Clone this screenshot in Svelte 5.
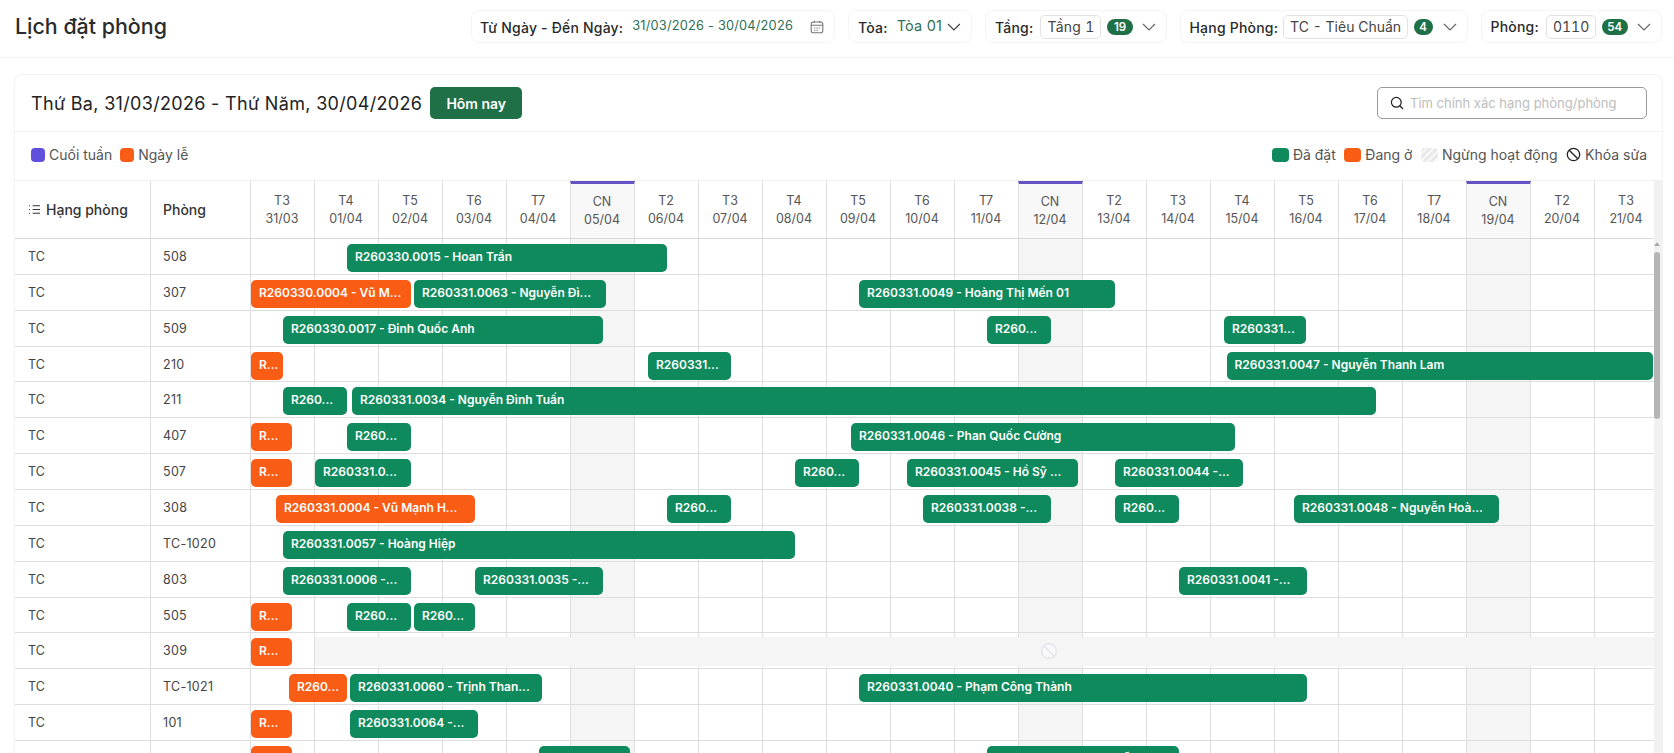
<script>
  const DAY = 64;
  const BASE = 250.5;
  const names = ['T3','T4','T5','T6','T7','CN','T2'];
  const days = Array.from({ length: 22 }, (_, i) => {
    const d = new Date(2026, 2, 31 + i);
    const dd = String(d.getDate()).padStart(2, '0');
    const mm = String(d.getMonth() + 1).padStart(2, '0');
    return { label: names[i % 7], date: `${dd}/${mm}`, weekend: i % 7 === 5 };
  });
  const g = (a, b, text) => ({ a, b, text, kind: 'booked' });
  const o = (a, b, text) => ({ a, b, text, kind: 'staying' });
  const rows = [
    { room: '508', bars: [g(347, 667, 'R260330.0015 - Hoan Trần')] },
    { room: '307', bars: [o(251, 411, 'R260330.0004 - Vũ M...'), g(414, 606, 'R260331.0063 - Nguyễn Đì...'), g(859, 1115, 'R260331.0049 - Hoàng Thị Mến 01')] },
    { room: '509', bars: [g(283, 603, 'R260330.0017 - Đinh Quốc Anh'), g(987, 1051, 'R260...'), g(1224, 1306, 'R260331...')] },
    { room: '210', bars: [o(251, 283, 'R...'), g(648, 731, 'R260331...'), g(1226.5, 1653, 'R260331.0047 - Nguyễn Thanh Lam')] },
    { room: '211', bars: [g(283, 347, 'R260...'), g(352, 1376, 'R260331.0034 - Nguyễn Đình Tuấn')] },
    { room: '407', bars: [o(251, 291.5, 'R...'), g(347, 411, 'R260...'), g(851, 1235, 'R260331.0046 - Phan Quốc Cường')] },
    { room: '507', bars: [o(251, 291.5, 'R...'), g(315, 411, 'R260331.0...'), g(795, 859, 'R260...'), g(907, 1078, 'R260331.0045 - Hồ Sỹ ...'), g(1115, 1243, 'R260331.0044 -...')] },
    { room: '308', bars: [o(276, 475, 'R260331.0004 - Vũ Mạnh H...'), g(667, 731, 'R260...'), g(923, 1051, 'R260331.0038 -...'), g(1115, 1179, 'R260...'), g(1294, 1499, 'R260331.0048 - Nguyễn Hoà...')] },
    { room: 'TC-1020', bars: [g(283, 795, 'R260331.0057 - Hoàng Hiệp')] },
    { room: '803', bars: [g(283, 411, 'R260331.0006 -...'), g(475, 603, 'R260331.0035 -...'), g(1179, 1307, 'R260331.0041 -...')] },
    { room: '505', bars: [o(251, 291.5, 'R...'), g(347, 411, 'R260...'), g(414, 475, 'R260...')] },
    { room: '309', locked: true, bars: [o(251, 291.5, 'R...')] },
    { room: 'TC-1021', bars: [o(289, 347, 'R260...'), g(350, 542, 'R260331.0060 - Trịnh Than...'), g(859, 1307, 'R260331.0040 - Phạm Công Thành')] },
    { room: '101', bars: [o(251, 291.5, 'R...'), g(350, 478, 'R260331.0064 -...')] },
    { room: '', bars: [o(251, 291.5, ''), g(539, 630, ''), g(987, 1179, 'R260331.0042 - Nguyễn Văn...')] }
  ];
  const left = (b) => b.a - BASE;
  const width = (b) => b.b - b.a;
</script>

<div class="page">
  <header class="topbar">
    <h1>Lịch đặt phòng</h1>
    <div class="filters">
      <div class="filter date">
        <span class="lbl">Từ Ngày - Đến Ngày:</span>
        <span class="val small">31/03/2026 - 30/04/2026</span>
        <svg class="cal" viewBox="0 0 14 14" fill="none" stroke="#777" stroke-width="1.1"><rect x="1.2" y="2" width="11.6" height="10.8" rx="2.4"/><path d="M1.2 5.3h11.6M4.3 .8v2M9.7 .8v2"/><path d="M4 8h1.4M6.4 8h1.4M8.8 8h1.4M4 10.3h1.4M6.4 10.3h1.4" stroke-width=".9"/></svg>
      </div>
      <div class="filter toa">
        <span class="lbl">Tòa:</span>
        <span class="val">Tòa 01</span>
        <svg class="chev dark" viewBox="0 0 14 8" fill="none" stroke="#444" stroke-width="1.2"><path d="M1 1l6 6 6-6"/></svg>
      </div>
      <div class="filter tang">
        <span class="lbl">Tầng:</span>
        <span class="tag">Tầng 1</span>
        <span class="badge">19</span>
        <svg class="chev" viewBox="0 0 14 8" fill="none" stroke="#666" stroke-width="1.2"><path d="M1 1l6 6 6-6"/></svg>
      </div>
      <div class="filter hang">
        <span class="lbl">Hạng Phòng:</span>
        <span class="tag">TC - Tiêu Chuẩn</span>
        <span class="badge one">4</span>
        <svg class="chev" viewBox="0 0 14 8" fill="none" stroke="#666" stroke-width="1.2"><path d="M1 1l6 6 6-6"/></svg>
      </div>
      <div class="filter phong">
        <span class="lbl">Phòng:</span>
        <span class="tag">0110</span>
        <span class="badge">54</span>
        <svg class="chev" viewBox="0 0 14 8" fill="none" stroke="#666" stroke-width="1.2"><path d="M1 1l6 6 6-6"/></svg>
      </div>
    </div>
  </header>

  <section class="card">
    <div class="card-head">
      <h2>Thứ Ba, 31/03/2026 - Thứ Năm, 30/04/2026</h2>
      <button class="today">Hôm nay</button>
      <label class="search">
        <svg viewBox="0 0 16 16" fill="none" stroke="#222" stroke-width="1.4"><circle cx="7.2" cy="7.2" r="5.6"/><path d="M11.2 11.2l3.6 3.6"/></svg>
        <input placeholder="Tìm chính xác hạng phòng/phòng" />
      </label>
    </div>

    <div class="legend">
      <div class="legend-group">
        <span class="key"><i class="sw purple"></i>Cuối tuần</span>
        <span class="key"><i class="sw orange"></i>Ngày lễ</span>
      </div>
      <div class="legend-group right">
        <span class="key"><i class="sw wide green"></i>Đã đặt</span>
        <span class="key"><i class="sw wide orange"></i>Đang ở</span>
        <span class="key"><i class="sw wide hatch"></i>Ngừng hoạt động</span>
        <span class="key"><svg class="ban" viewBox="0 0 16 16" fill="none" stroke="#222" stroke-width="1.4"><circle cx="8" cy="8" r="6.6"/><path d="M3.4 3.4l9.2 9.2"/></svg>Khóa sửa</span>
      </div>
    </div>

    <div class="table">
      <div class="grid">
        <div class="row head">
          <div class="c1 hd">
            <svg viewBox="0 0 14 12" fill="none" stroke="#333" stroke-width="1.1"><path d="M5 2h8M5 6h8M5 10h8"/><path d="M1 2h1.6M1 6h1.6M1 10h1.6" stroke-dasharray="1 .6"/></svg>
            Hạng phòng
          </div>
          <div class="c2 hd">Phòng</div>
          <div class="days">
            {#each days as d}
              <div class="dh" class:we={d.weekend}><span>{d.label}</span><span>{d.date}</span></div>
            {/each}
          </div>
        </div>
        {#each rows as r}
          <div class="row">
            <div class="c1">{r.room ? 'TC' : ''}</div>
            <div class="c2">{r.room}</div>
            <div class="days">
              {#each days as d}
                <div class="cell" class:we={d.weekend}></div>
              {/each}
              {#if r.locked}
                <div class="locked">
                  <svg viewBox="0 0 18 18" fill="#f8f8fa" stroke="#e6e6ea" stroke-width="1.6"><circle cx="9" cy="9" r="7.4"/><path d="M4 4l10 10"/></svg>
                </div>
              {/if}
              {#each r.bars as b}
                <div class="bar {b.kind}" style="left:{left(b)}px;width:{width(b)}px">{b.text}</div>
              {/each}
            </div>
          </div>
        {/each}
      </div>
      <div class="scrollbar">
        <svg viewBox="0 0 8 5" fill="#a8a8a8"><path d="M4 0l4 5H0z"/></svg>
        <div class="thumb"></div>
      </div>
    </div>
  </section>
</div>

<style>
  :global(body) {
    margin: 0;
    background: #fff;
    font-family: Inter, "Noto Sans", sans-serif;
    color: #222;
  }
  .page {
    height: 753px;
    overflow: hidden;
    display: flex;
    flex-direction: column;
  }
  .topbar {
    height: 58px;
    flex: none;
    box-sizing: border-box;
    border-bottom: 1px solid #f3f3f3;
    display: flex;
    align-items: flex-start;
    justify-content: space-between;
    padding: 10px 12px 0 15px;
  }
  h1 {
    margin: 2px 0 0;
    font-size: 21.4px;
    line-height: 28px;
    font-weight: 500;
    color: #2b2b2b;
  }
  .filters { display: flex; gap: 13px; }
  .filter {
    box-sizing: border-box;
    height: 33px;
    border: 1px solid #f5f5f5;
    border-radius: 8px;
    display: flex;
    align-items: center;
    padding: 0 9px;
    font-size: 14px;
    white-space: nowrap;
  }
  .date { width: 364px; padding-left: 8px; }
  .toa { width: 124px; }
  .tang { width: 182px; }
  .hang { width: 288px; padding-left: 8.5px; }
  .phong { width: 181px; padding-left: 8.5px; }
  .lbl { font-weight: 500; color: #2a2a2a; letter-spacing: .2px; margin-top: 2px; }
  .phong .lbl { margin: 0 0 1px; }
  .val { color: #2f6f55; font-size: 14.5px; margin-left: 9px; margin-bottom: 2px; letter-spacing: .2px; }
  .val.small { font-size: 12.8px; margin-left: 9px; }
  .cal { width: 14px; height: 14px; margin-left: auto; margin-right: 1px; }
  .tag {
    box-sizing: border-box;
    height: 24px;
    display: inline-flex;
    align-items: center;
    padding: 0 6px;
    margin-left: 7px;
    border: 1px solid #e2e2e2;
    border-radius: 5px;
    font-size: 14px;
    color: #444;
    letter-spacing: .25px;
    font-variant-numeric: tabular-nums;
  }
  .hang .tag { letter-spacing: 0; margin-left: 5px; }
  .phong .tag { letter-spacing: 0; }
  .badge {
    min-width: 26px;
    height: 16px;
    box-sizing: border-box;
    margin-left: 5.5px;
    border-radius: 8px;
    background: #1f6f47;
    color: #fff;
    font-size: 11.5px;
    font-weight: 600;
    line-height: 16px;
    text-align: center;
  }
  .badge.one { min-width: 19px; }
  .chev { width: 14px; height: 8px; margin-left: auto; margin-right: 1px; }
  .chev.dark { margin-left: 5px; }

  .card {
    margin: 16px 11px 0 14px;
    flex: 1;
    min-height: 0;
    border: 1px solid #f3f3f3;
    border-bottom: 0;
    border-radius: 8px 8px 0 0;
    display: flex;
    flex-direction: column;
  }
  .card-head {
    height: 57px;
    flex: none;
    box-sizing: border-box;
    border-bottom: 1px solid #f3f3f3;
    display: flex;
    align-items: center;
    padding: 0 15px 0 16px;
  }
  h2 {
    margin: 0;
    font-size: 18px;
    font-weight: 400;
    color: #222;
    letter-spacing: .32px;
  }
  .today {
    margin-left: 8px;
    width: 92px;
    height: 32px;
    border: 0;
    border-radius: 5px;
    background: #1f6f47;
    color: #fff;
    font: 600 14px Inter, sans-serif;
  }
  .search {
    margin-left: auto;
    width: 270px;
    height: 32px;
    box-sizing: border-box;
    border: 1px solid #9a9a9a;
    border-radius: 5px;
    display: flex;
    align-items: center;
    padding-left: 12px;
    gap: 6px;
  }
  .search svg { width: 14px; height: 14px; flex: none; }
  .search input {
    flex: 1;
    min-width: 0;
    border: 0;
    outline: 0;
    padding: 0;
    font: 13px Inter, sans-serif;
    background: transparent;
  }
  .search input::placeholder { color: #bdbdbd; opacity: 1; }

  .legend {
    height: 49px;
    flex: none;
    box-sizing: border-box;
    display: flex;
    align-items: center;
    justify-content: space-between;
    padding: 0 15px 4px 16px;
    font-size: 14px;
    color: #555;
  }
  .legend-group { display: flex; gap: 8px; }
  .legend-group.right { gap: 8.5px; }
  .key { display: inline-flex; align-items: center; gap: 4px; white-space: nowrap; }
  .sw { width: 14px; height: 14px; border-radius: 4px; display: block; }
  .sw.wide { width: 17px; }
  .purple { background: #5f4fdc; }
  .orange { background: #f95c14; }
  .green { background: #0e8a5c; }
  .hatch {
    background: repeating-linear-gradient(135deg, #e9e9e9 0 3px, #f7f7f7 3px 5px);
  }
  .ban { width: 15px; height: 15px; }

  .table {
    flex: 1;
    min-height: 0;
    display: flex;
    border-top: 1px solid #f0f0f0;
    margin-top: -1px;
  }
  .grid { flex: 1; min-width: 0; overflow: hidden; }
  .row {
    display: flex;
    height: 35.86px;
    box-sizing: border-box;
    border-bottom: 1px solid #dedede;
    font-size: 12.5px;
    color: #444;
  }
  .row.head {
    height: 58px;
    border-bottom: 1px solid #d8d8d8;
  }
  .c1, .c2 {
    flex: none;
    box-sizing: border-box;
    display: flex;
    align-items: center;
    border-right: 1px solid #dedede;
  }
  .c1 { width: 135.5px; padding-left: 13px; }
  .c2 { width: 100px; padding-left: 12.5px; letter-spacing: .3px; }
  .hd { font-size: 14px; font-weight: 500; color: #333; letter-spacing: 0; }
  .c1.hd svg { width: 13px; height: 11px; margin-right: 5px; }
  .days { flex: none; display: flex; position: relative; }
  .dh, .cell {
    flex: none;
    width: 64px;
    box-sizing: border-box;
    border-right: 1px solid #e0e0e0;
  }
  .dh {
    display: flex;
    flex-direction: column;
    align-items: center;
    justify-content: center;
    font-size: 12.5px;
    line-height: 18px;
    color: #555;
  }
  .dh.we {
    background: #f8f8f8;
    border-top: 3px solid #6353c4;
    border-left: 1px solid #e0e0e0;
    margin-left: -1px;
    width: 65px;
  }
  .cell.we { background: #f5f5f5; }
  .bar {
    position: absolute;
    top: 5px;
    height: 28px;
    box-sizing: border-box;
    border-radius: 5px;
    padding-left: 8px;
    color: #fff;
    font-size: 12px;
    font-weight: 600;
    line-height: 26px;
    white-space: nowrap;
    overflow: hidden;
  }
  .booked { background: #0e8a5c; }
  .staying { background: #f95c14; }
  .locked {
    position: absolute;
    left: 64.5px;
    right: 0;
    top: 4px;
    height: 29px;
    background: #f5f5f5;
  }
  .locked svg {
    position: absolute;
    left: 725px;
    top: 5px;
    width: 18px;
    height: 18px;
  }
  .scrollbar {
    flex: none;
    width: 8px;
    background: #f1f1f1;
    position: relative;
  }
  .scrollbar svg {
    position: absolute;
    left: 0;
    top: 61px;
    width: 6px;
    height: 4px;
  }
  .thumb {
    position: absolute;
    left: 0;
    top: 71px;
    width: 6px;
    height: 167px;
    border-radius: 3px;
    background: #b5b5b5;
  }
</style>
